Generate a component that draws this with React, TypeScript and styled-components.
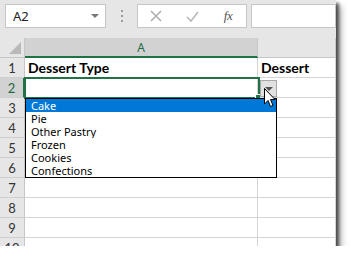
import React from 'react';
import styled, { createGlobalStyle } from 'styled-components';

const GlobalStyle = createGlobalStyle`
  html, body {
    margin: 0;
    padding: 0;
    background: #ffffff;
  }
`;

const GREEN = '#217346';
const GRID_LINE = '#d4d4d4';

const Frame = styled.div`
  position: relative;
  width: 336px;
  height: 246px;
  overflow: hidden;
  background: #ffffff;
  box-shadow: 3px 3px 3px rgba(0, 0, 0, 0.6), 6px 6px 6px rgba(0, 0, 0, 0.25);
  font-family: 'Noto Sans', 'Open Sans', sans-serif;
`;

const FormulaBar = styled.div`
  display: flex;
  align-items: flex-start;
  height: 38px;
  box-sizing: border-box;
  padding: 4px 0 0 5px;
  background: #e6e6e6;
`;

const Field = styled.div<{ $width?: number }>`
  display: flex;
  align-items: center;
  box-sizing: border-box;
  height: 24px;
  width: ${({ $width }) => ($width ? `${$width}px` : 'auto')};
  flex: ${({ $width }) => ($width ? '0 0 auto' : '1')};
  background: #ffffff;
  border: 1px solid #c6c6c6;
`;

const NameText = styled.span`
  flex: 1;
  padding-left: 7px;
  font-size: 13px;
  color: #222;
`;

const NameArrow = styled.span`
  width: 0;
  height: 0;
  margin-right: 6px;
  border-left: 4px solid transparent;
  border-right: 4px solid transparent;
  border-top: 4px solid #777;
`;

const Grip = styled.div`
  display: flex;
  flex-direction: column;
  align-items: center;
  justify-content: center;
  gap: 3px;
  width: 31px;
  height: 24px;
`;

const GripDot = styled.span`
  width: 2px;
  height: 2px;
  background: #9a9a9a;
`;

const ButtonSlot = styled.div`
  display: flex;
  align-items: center;
  justify-content: center;
  width: 36px;
  height: 22px;
  color: #b4b4b4;
`;

const FxText = styled.span`
  font-family: 'Liberation Serif', serif;
  font-style: italic;
  font-size: 13px;
  color: #555;
  letter-spacing: -0.5px;
`;

const Spacer = styled.div`
  width: 4px;
`;

const Sheet = styled.div`
  position: relative;
  display: grid;
  grid-template-columns: 25px 233px 78px;
  grid-auto-rows: 20px;
`;

const Corner = styled.div`
  position: relative;
  box-sizing: border-box;
  background: #e6e6e6;
  border-right: 1px solid #c6c6c6;
  border-bottom: 1px solid #c6c6c6;

  &::after {
    content: '';
    position: absolute;
    right: 3px;
    bottom: 3px;
    width: 0;
    height: 0;
    border-left: 12px solid transparent;
    border-bottom: 12px solid #b9b9b9;
  }
`;

const ColHeader = styled.div<{ $active?: boolean }>`
  display: flex;
  align-items: center;
  justify-content: center;
  box-sizing: border-box;
  font-size: 12px;
  background: ${({ $active }) => ($active ? '#d2d2d2' : '#e6e6e6')};
  color: ${({ $active }) => ($active ? '#1e6b42' : '#444')};
  border-right: 1px solid #c6c6c6;
  border-bottom: ${({ $active }) => ($active ? `2px solid ${GREEN}` : '1px solid #c6c6c6')};
`;

const RowHeader = styled.div<{ $active?: boolean }>`
  display: flex;
  align-items: center;
  justify-content: center;
  box-sizing: border-box;
  overflow: hidden;
  font-family: 'Lato', 'Noto Sans', sans-serif;
  font-size: 13px;
  background: ${({ $active }) => ($active ? '#d2d2d2' : '#e6e6e6')};
  color: ${({ $active }) => ($active ? '#1e6b42' : '#333')};
  border-right: ${({ $active }) => ($active ? `2px solid ${GREEN}` : '1px solid #c6c6c6')};
  border-bottom: 1px solid #cfcfcf;
`;

const Cell = styled.div<{ $bold?: boolean }>`
  display: flex;
  align-items: center;
  box-sizing: border-box;
  padding-left: 3px;
  font-family: 'Lato', 'Noto Sans', sans-serif;
  font-size: 14px;
  font-weight: ${({ $bold }) => ($bold ? 700 : 400)};
  color: #000;
  border-right: 1px solid ${GRID_LINE};
  border-bottom: 1px solid ${GRID_LINE};
  white-space: nowrap;
  overflow: hidden;
`;

const Selection = styled.div`
  position: absolute;
  left: 24px;
  top: 39px;
  width: 236px;
  height: 22px;
  box-sizing: border-box;
  border: 2px solid ${GREEN};

  &::after {
    content: '';
    position: absolute;
    right: -3px;
    bottom: -3px;
    width: 4px;
    height: 4px;
    background: ${GREEN};
    border: 1px solid #fff;
  }
`;

const DropButton = styled.div`
  position: absolute;
  left: 260px;
  top: 42px;
  width: 17px;
  height: 17px;
  box-sizing: border-box;
  display: flex;
  align-items: center;
  justify-content: center;
  background: #e1e1e1;
  border: 1px solid #a8a8a8;

  &::before {
    content: '';
    width: 0;
    height: 0;
    border-left: 4px solid transparent;
    border-right: 4px solid transparent;
    border-top: 4px solid #555;
  }
`;

const List = styled.ul`
  position: absolute;
  left: 25px;
  top: 60px;
  width: 252px;
  margin: 0;
  padding: 0;
  list-style: none;
  box-sizing: border-box;
  background: #ffffff;
  border: 1px solid #000;
`;

const ListItem = styled.li<{ $selected?: boolean }>`
  height: 13px;
  line-height: 13px;
  overflow: hidden;
  padding-left: 5px;
  font-family: 'Noto Sans', 'Open Sans', sans-serif;
  font-size: 11px;
  background: ${({ $selected }) => ($selected ? '#0078d7' : 'transparent')};
  color: ${({ $selected }) => ($selected ? '#ffffff' : '#000000')};
`;

const Pointer = styled.svg`
  position: absolute;
  left: 264px;
  top: 50px;
`;

const rows: Array<{ a: string; b: string; bold?: boolean }> = [
  { a: 'Dessert Type', b: 'Dessert', bold: true },
  { a: '', b: '' },
  { a: '', b: '' },
  { a: '', b: '' },
  { a: '', b: '' },
  { a: '', b: '' },
  { a: '', b: '' },
  { a: '', b: '' },
  { a: '', b: '' },
  { a: '', b: '' },
];

const options = ['Cake', 'Pie', 'Other Pastry', 'Frozen', 'Cookies', 'Confections'];

export default function App() {
  return (
    <>
      <GlobalStyle />
      <Frame>
        <FormulaBar>
          <Field $width={101}>
            <NameText>A2</NameText>
            <NameArrow />
          </Field>
          <Grip>
            <GripDot />
            <GripDot />
            <GripDot />
          </Grip>
          <Field $width={110}>
            <ButtonSlot>
              <svg width="12" height="12" viewBox="0 0 12 12">
                <path d="M1 1 L11 11 M11 1 L1 11" stroke="#b0b0b0" strokeWidth="1.6" fill="none" />
              </svg>
            </ButtonSlot>
            <ButtonSlot>
              <svg width="13" height="11" viewBox="0 0 13 11">
                <path d="M1 6 L5 10 L12 1" stroke="#b8b8b8" strokeWidth="1.6" fill="none" />
              </svg>
            </ButtonSlot>
            <ButtonSlot>
              <FxText>fx</FxText>
            </ButtonSlot>
          </Field>
          <Spacer />
          <Field />
        </FormulaBar>
        <Sheet>
          <Corner />
          <ColHeader $active>A</ColHeader>
          <ColHeader />
          {rows.map((row, i) => (
            <React.Fragment key={i}>
              <RowHeader $active={i === 1}>{i + 1}</RowHeader>
              <Cell $bold={row.bold}>{row.a}</Cell>
              <Cell $bold={row.bold}>{row.b}</Cell>
            </React.Fragment>
          ))}
          <Selection />
          <DropButton />
          <List>
            {options.map((opt, i) => (
              <ListItem key={opt} $selected={i === 0}>
                {opt}
              </ListItem>
            ))}
          </List>
          <Pointer width="12" height="20" viewBox="0 0 12 20">
            <path
              d="M0.5 0.5 L0.5 16 L4 12.5 L6.5 18.5 L9 17.5 L6.5 11.5 L11 11.5 Z"
              fill="#ffffff"
              stroke="#000000"
              strokeWidth="1"
              strokeLinejoin="round"
            />
          </Pointer>
        </Sheet>
      </Frame>
    </>
  );
}
